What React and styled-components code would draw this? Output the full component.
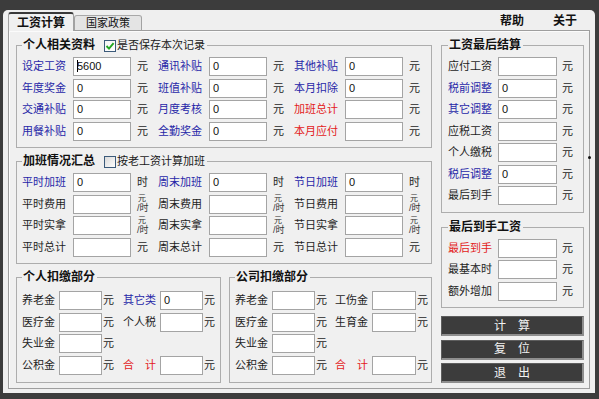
import React from "react";
import styled, { createGlobalStyle } from "styled-components";

const FONT = `"Liberation Sans", "Noto Sans CJK SC", sans-serif`;

const GlobalStyle = createGlobalStyle`
  html, body { margin: 0; padding: 0; }
  body {
    background: #3c3c3c;
    font-family: ${FONT};
    font-size: 11px;
    color: #1e1e1e;
  }
  #root { width: 599px; height: 399px; overflow: hidden; }
`;

const Window = styled.div`
  position: relative;
  box-sizing: border-box;
  width: 592px;
  height: 383px;
  margin: 10px 0 0 3px;
  padding: 2px 5px 4px 5px;
  background: #efefef;
  border-radius: 5px 5px 0 0;
  display: flex;
  flex-direction: column;
`;

const TabRow = styled.div`
  position: relative;
  z-index: 1;
  display: flex;
  align-items: flex-end;
  height: 18px;
`;

const Tab = styled.div`
  box-sizing: border-box;
  width: ${(p) => (p.$active ? 66 : 68)}px;
  height: ${(p) => (p.$active ? 19 : 16)}px;
  margin-bottom: -1px;
  display: flex;
  align-items: center;
  justify-content: center;
  background: ${(p) => (p.$active ? "#f0f0f0" : "#e4e4e4")};
  border: 1px solid #a2a2a2;
  border-top: ${(p) => (p.$active ? "2px solid #3a3a3a" : "1px solid #a8a8a8")};
  border-bottom: ${(p) => (p.$active ? "none" : "1px solid #9e9e9e")};
  border-radius: 3px 3px 0 0;
  font-size: ${(p) => (p.$active ? 12 : 11)}px;
  font-weight: ${(p) => (p.$active ? 700 : 400)};
  color: #111;
  line-height: 14px;
`;

const Menu = styled.div`
  margin-left: auto;
  align-self: center;
  display: flex;
  gap: 29px;
  padding-right: 13px;
  font-size: 12px;
  font-weight: 700;
  color: #111;
  line-height: 14px;
`;

const Panel = styled.div`
  flex: 1;
  box-sizing: border-box;
  border: 1px solid #9e9e9e;
  box-shadow: inset 1px 1px 0 #fbfbfb;
  padding: 8px 6px 0 7px;
  display: flex;
  gap: 9px;
  background: #f0f0f0;
`;

const LeftCol = styled.div`
  width: 416px;
  display: flex;
  flex-direction: column;
  gap: 7.5px;
`;

const RightCol = styled.div`
  width: 143px;
  display: flex;
  flex-direction: column;
`;

const BottomRow = styled.div`
  display: flex;
  gap: 8px;
`;

const Group = styled.fieldset`
  margin: 0;
  margin-top: ${(p) => p.$mt || 0}px;
  min-width: 0;
  box-sizing: border-box;
  width: ${(p) => (p.$w ? `${p.$w}px` : "auto")};
  padding: ${(p) => p.$pt}px 4px ${(p) => p.$pb}px ${(p) => p.$pl}px;
  border: 1px solid #adadad;
`;

const Legend = styled.legend`
  display: flex;
  align-items: center;
  height: 13px;
  padding: 0 2px 0 1px;
`;

const Title = styled.span`
  font-size: 12px;
  font-weight: 700;
  line-height: 13px;
  color: #111;
`;

const CheckLabel = styled.span`
  display: flex;
  align-items: center;
  margin-left: 9px;
  font-size: 11px;
  line-height: 13px;
  color: #1a1a1a;
`;

const CheckIcon = styled.svg`
  display: block;
  margin-right: 1px;
`;

const Grid = styled.div`
  display: grid;
  grid-template-columns: ${(p) => p.$cols};
  grid-auto-rows: 19px;
  row-gap: 2.5px;
  align-items: center;
`;

const TONES = { blue: "#2727a8", red: "#e31b1b" };

const Label = styled.span`
  color: ${(p) => TONES[p.$tone] || "#1e1e1e"};
  white-space: nowrap;
  font-size: 11px;
  line-height: 19px;
`;

const Field = styled.div`
  box-sizing: border-box;
  height: 19px;
  border: 1px solid #a4a4a4;
  background: #fff;
  padding-left: 3px;
  font-family: "Liberation Sans", sans-serif;
  font-size: 11px;
  line-height: 17px;
  color: #111;
  white-space: nowrap;
  overflow: hidden;
`;

const Caret = styled.span`
  display: inline-block;
  width: 1px;
  height: 12px;
  margin-right: -1px;
  background: #000;
  vertical-align: -2px;
`;

const Unit = styled.span`
  padding-left: ${(p) => p.$pad}px;
  font-size: 11px;
  line-height: 19px;
  color: #1e1e1e;
  white-space: nowrap;
`;

const PerHour = styled.span`
  display: flex;
  flex-direction: column;
  padding-left: ${(p) => p.$pad}px;
  color: #333;
  white-space: nowrap;
`;

const PerTop = styled.span`
  font-size: 8px;
  line-height: 8px;
  padding-left: 1px;
`;

const PerBottom = styled.span`
  font-size: 9px;
  line-height: 10px;
`;

const Buttons = styled.div`
  margin-top: 8.5px;
  display: flex;
  flex-direction: column;
  gap: 3.5px;
`;

const ActionButton = styled.button`
  box-sizing: border-box;
  width: 143px;
  height: 20px;
  padding: 0;
  background: #3c3c3c;
  color: #f2f2f2;
  border: 1px solid #5e5e5e;
  border-right: 2px solid #8e8e8e;
  border-bottom: 2px solid #8e8e8e;
  font-family: ${FONT};
  font-size: 12px;
  line-height: 16px;
  cursor: pointer;
`;

const Speck = styled.span`
  position: absolute;
  left: 585px;
  top: 146px;
  width: 3px;
  height: 3px;
  border-radius: 50%;
  background: #111;
`;

const CheckBox = ({ checked }) => (
  <CheckIcon width="12" height="12" viewBox="0 0 12 12">
    <defs>
      <linearGradient id={checked ? "cbg1" : "cbg2"} x1="0" y1="0" x2="1" y2="1">
        <stop offset="0" stopColor={checked ? "#f4f4f4" : "#d8d8d8"} />
        <stop offset="1" stopColor="#ffffff" />
      </linearGradient>
    </defs>
    <rect x="0.5" y="0.5" width="11" height="11" fill={`url(#${checked ? "cbg1" : "cbg2"})`} stroke="#3b5a7a" />
    {checked && (
      <path d="M2.5 6 L5 8.6 L9.6 3.2" fill="none" stroke="#21a621" strokeWidth="1.9" />
    )}
  </CheckIcon>
);

const CARET = "CARET";

const Cell = ({ cell, pad }) => {
  if (!cell) return (<><span /><span /><span /></>);
  const [label, tone, value = "", unit = "元"] = cell;
  return (
    <>
      <Label $tone={tone}>{label}</Label>
      <Field>{value === CARET ? (<><Caret />5600</>) : value}</Field>
      {unit === "ph" ? (
        <PerHour $pad={pad}>
          <PerTop>元</PerTop>
          <PerBottom>/时</PerBottom>
        </PerHour>
      ) : (
        <Unit $pad={pad}>{unit}</Unit>
      )}
    </>
  );
};

const FieldGrid = ({ rows, cols, pad }) => (
  <Grid $cols={cols}>
    {rows.map((row, ri) =>
      row.map((cell, ci) => (
        <React.Fragment key={`${ri}-${ci}`}>
          <Cell cell={cell} pad={pad} />
        </React.Fragment>
      ))
    )}
  </Grid>
);

const personalRows = [
  [["设定工资", "blue", CARET], ["通讯补贴", "blue", "0"], ["其他补贴", "blue", "0"]],
  [["年度奖金", "blue", "0"], ["班值补贴", "blue", "0"], ["本月扣除", "blue", "0"]],
  [["交通补贴", "blue", "0"], ["月度考核", "blue", "0"], ["加班总计", "red", ""]],
  [["用餐补贴", "blue", "0"], ["全勤奖金", "blue", "0"], ["本月应付", "red", ""]],
];

const overtimeRows = [
  [["平时加班", "blue", "0", "时"], ["周末加班", "blue", "0", "时"], ["节日加班", "blue", "0", "时"]],
  [["平时费用", "", "", "ph"], ["周末费用", "", "", "ph"], ["节日费用", "", "", "ph"]],
  [["平时实拿", "", "", "ph"], ["周末实拿", "", "", "ph"], ["节日实拿", "", "", "ph"]],
  [["平时总计", "", ""], ["周末总计", "", ""], ["节日总计", "", ""]],
];

const selfRows = [
  [["养老金"], ["其它类", "blue", "0"]],
  [["医疗金"], ["个人税"]],
  [["失业金"], null],
  [["公积金"], ["合\u3000计", "red"]],
];

const companyRows = [
  [["养老金"], ["工伤金"]],
  [["医疗金"], ["生育金"]],
  [["失业金"], null],
  [["公积金"], ["合\u3000计", "red"]],
];

const settleRows = [
  [["应付工资"]],
  [["税前调整", "blue", "0"]],
  [["其它调整", "blue", "0"]],
  [["应税工资"]],
  [["个人缴税"]],
  [["税后调整", "blue", "0"]],
  [["最后到手"]],
];

const finalRows = [
  [["最后到手", "red"]],
  [["最基本时"]],
  [["额外增加"]],
];

const WIDE = "51px 58px 27px 51px 58px 27px 51px 58px 1fr";

export default function App() {
  return (
    <>
      <GlobalStyle />
      <Window>
        <TabRow>
          <Tab $active>工资计算</Tab>
          <Tab>国家政策</Tab>
          <Menu>
            <span>帮助</span>
            <span>关于</span>
          </Menu>
        </TabRow>
        <Panel>
          <LeftCol>
            <Group $pt={5} $pb={6} $pl={5}>
              <Legend>
                <Title>个人相关资料</Title>
                <CheckLabel>
                  <CheckBox checked />
                  是否保存本次记录
                </CheckLabel>
              </Legend>
              <FieldGrid rows={personalRows} cols={WIDE} pad={6} />
            </Group>
            <Group $pt={5} $pb={6} $pl={5}>
              <Legend>
                <Title>加班情况汇总</Title>
                <CheckLabel>
                  <CheckBox />
                  按老工资计算加班
                </CheckLabel>
              </Legend>
              <FieldGrid rows={overtimeRows} cols={WIDE} pad={6} />
            </Group>
            <BottomRow>
              <Group $w={205} $pt={7} $pb={7} $pl={5}>
                <Legend>
                  <Title>个人扣缴部分</Title>
                </Legend>
                <FieldGrid rows={selfRows} cols="37px 43px 21px 37px 43px 1fr" pad={1} />
              </Group>
              <Group $w={203} $pt={7} $pb={7} $pl={5}>
                <Legend>
                  <Title>公司扣缴部分</Title>
                </Legend>
                <FieldGrid rows={companyRows} cols="37px 43px 20px 37px 44px 1fr" pad={1} />
              </Group>
            </BottomRow>
          </LeftCol>
          <RightCol>
            <Group $pt={5} $pb={7} $pl={6}>
              <Legend>
                <Title>工资最后结算</Title>
              </Legend>
              <FieldGrid rows={settleRows} cols="50px 59px 1fr" pad={5} />
            </Group>
            <Group $mt={7.5} $pt={5} $pb={6} $pl={6}>
              <Legend>
                <Title>最后到手工资</Title>
              </Legend>
              <FieldGrid rows={finalRows} cols="50px 59px 1fr" pad={5} />
            </Group>
            <Buttons>
              <ActionButton type="button">计　算</ActionButton>
              <ActionButton type="button">复　位</ActionButton>
              <ActionButton type="button">退　出</ActionButton>
            </Buttons>
          </RightCol>
        </Panel>
        <Speck />
      </Window>
    </>
  );
}
